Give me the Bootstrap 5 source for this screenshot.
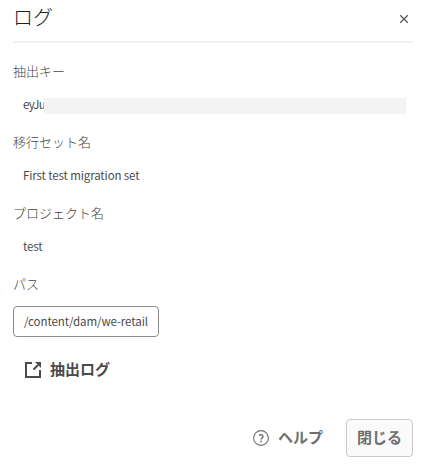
<!DOCTYPE html>
<html lang="ja">
<head>
<meta charset="utf-8">
<meta name="viewport" content="width=device-width, initial-scale=1">
<title>ログ</title>
<link href="https://cdn.jsdelivr.net/npm/bootstrap@5.3.0/dist/css/bootstrap.min.css" rel="stylesheet">
<style>
body { font-family: "Noto Sans CJK JP", "Noto Sans", sans-serif; background: #fff; color: #4b4b4b; overflow: hidden; }
.log-dialog { width: 421px; height: 466px; padding: 0 8px 9px 13px; }
.log-head { height: 43px; border-bottom: 2px solid #f0f0f0; padding: 0 4px 6px 0; }
.log-title { font-size: 20px; font-weight: 300; line-height: 36px; padding-bottom: 2px; color: #222; }
.close-btn { width: 10px; height: 10px; line-height: 0; margin-top: 2px; }
.log-body { padding-top: 18px; }
.field-label { font-size: 13px; line-height: 20px; height: 20px; font-weight: 300; color: #444; }
.field-value { font-size: 11.5px; letter-spacing: -.12px; line-height: 18px; height: 18px; margin: 14px 0 19px; padding: 0 7px 0 10px; }
.key-start { width: 21px; flex: none; letter-spacing: -.8px; }
.masked { height: 16px; background: #f4f4f4; margin-top: 3px; }
.path-box { width: 146px; height: 31px; border: 1px solid #8e8e8e; border-radius: 4px; font-size: 11.5px; letter-spacing: -.09px; margin-top: 12px; padding-top: 1px; }
.log-link { font-size: 15px; font-weight: 700; line-height: 22px; color: #4b4b4b; margin-top: 21px; padding-left: 12px; gap: 9px; }
.log-link:hover { color: #323232; }
.help-btn { font-size: 15px; color: #6e6e6e; gap: 9px; margin-right: 23px; }
.help-btn span { padding-bottom: 2px; }
.close-action { width: 67px; height: 38px; font-size: 15px; color: #6e6e6e; background: #fafafa; border: 1px solid #cacaca; border-radius: 4px; padding-bottom: 2px !important; }
.log-body, .log-head { flex: none; }
</style>
</head>
<body>
<main class="log-dialog d-flex flex-column">
  <header class="log-head d-flex align-items-center justify-content-between">
    <h1 class="log-title m-0">ログ</h1>
    <button class="btn p-0 border-0 close-btn" type="button" aria-label="閉じる">
      <svg width="10" height="10" viewBox="0 0 10 10" fill="none" stroke="#5a5a5a" stroke-width="1.3"><path d="M1.200 1.200l7.600 7.600M8.800 1.200l-7.600 7.600"/></svg>
    </button>
  </header>
  <section class="log-body">
    <div class="field-label">抽出キー</div>
    <div class="field-value d-flex align-items-center"><span class="key-start">eyJu</span><span class="masked flex-grow-1"></span></div>
    <div class="field-label">移行セット名</div>
    <div class="field-value">First test migration set</div>
    <div class="field-label">プロジェクト名</div>
    <div class="field-value">test</div>
    <div class="field-label">パス</div>
    <div class="path-box d-flex align-items-center justify-content-center">/content/dam/we-retail</div>
    <a href="#" class="log-link d-flex align-items-center text-decoration-none">
      <svg width="16" height="17" viewBox="0 0 16 17" fill="none" stroke="#4b4b4b" stroke-width="2"><path d="M7 2H1v14h14V9"/><path d="M8.500 8.500L13 4"/><path d="M10 1h6v6z" fill="#4b4b4b" stroke="none"/></svg>
      <span>抽出ログ</span>
    </a>
  </section>
  <footer class="d-flex align-items-center justify-content-end mt-auto">
    <button type="button" class="btn p-0 border-0 fw-bold d-flex align-items-center help-btn">
      <svg width="16" height="16" viewBox="0 0 16 16" fill="none" stroke="#6e6e6e"><circle cx="8" cy="8" r="7.400" stroke-width="1.100"/><path d="M6 5.300c1.700-1.200 3.900-.5 3.900 1.200C9.900 8 8.100 8.100 8.100 9.500" stroke-width="1.500"/><circle cx="8.100" cy="11.400" r=".9" fill="#6e6e6e" stroke="none"/></svg>
      <span>ヘルプ</span>
    </button>
    <button type="button" class="btn p-0 fw-bold close-action">閉じる</button>
  </footer>
</main>
<script src="https://cdn.jsdelivr.net/npm/bootstrap@5.3.0/dist/js/bootstrap.bundle.min.js"></script>
</body>
</html>
